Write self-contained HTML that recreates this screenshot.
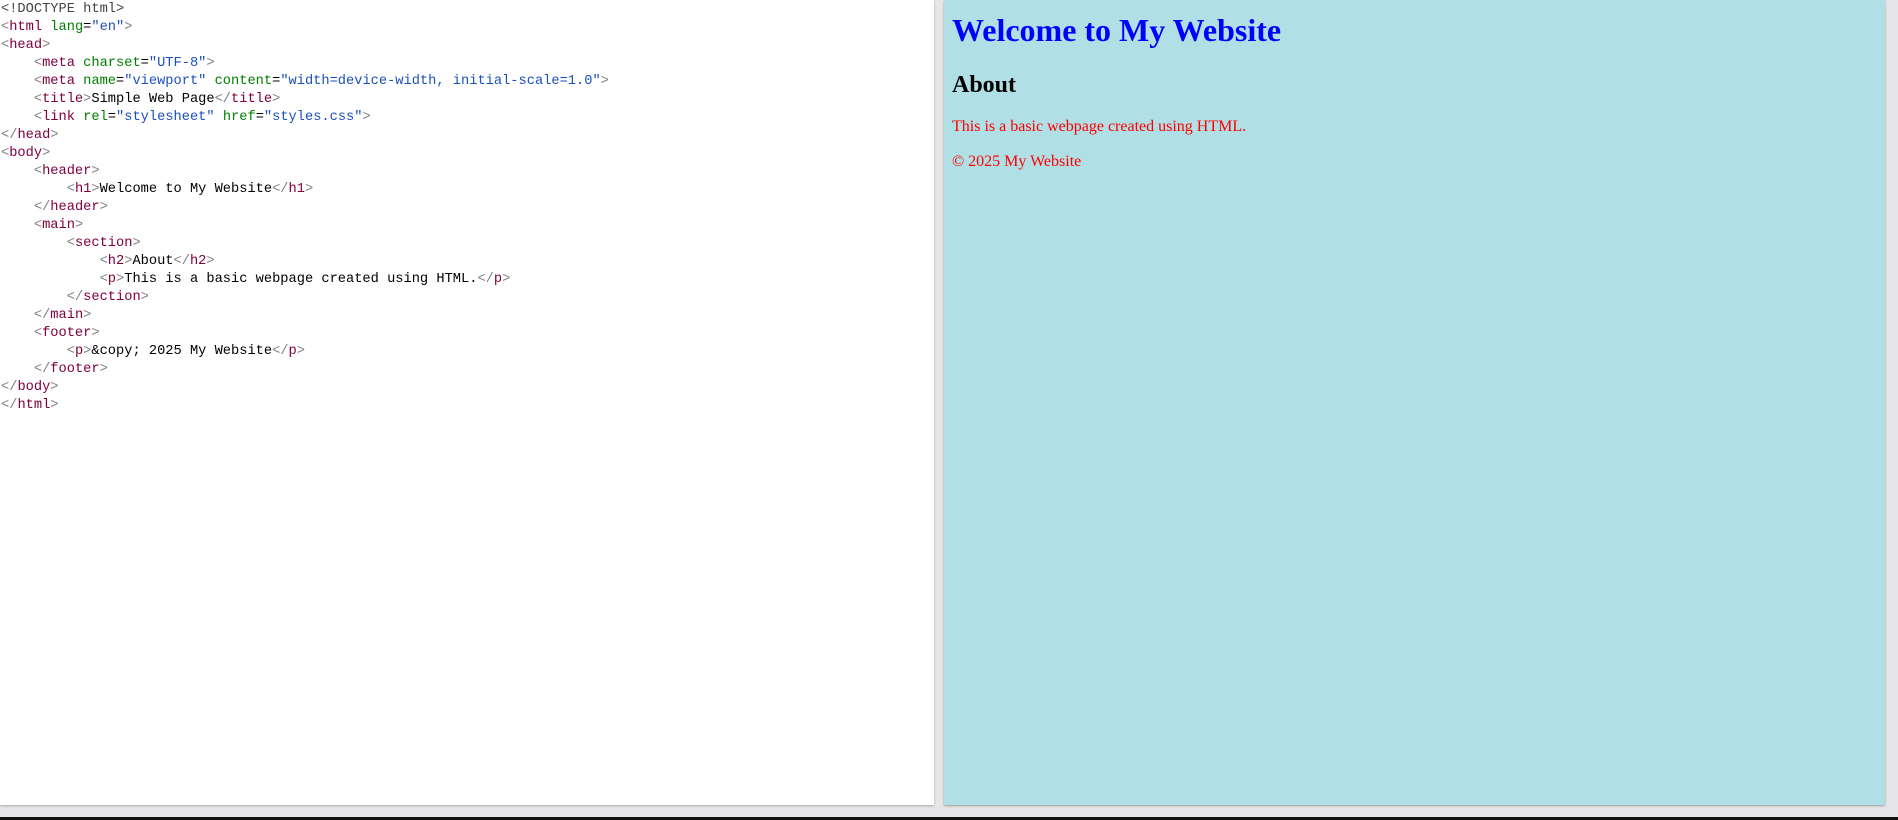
<!DOCTYPE html>
<html><head><meta charset="utf-8"><style>
html,body{margin:0;padding:0;width:1898px;height:820px;overflow:hidden;background:#e6e6e8;position:relative}
#code{position:absolute;left:0;top:0;width:934px;height:805px;background:#fff;box-shadow:0 1px 2px #aaa}
#code pre{margin:0;padding:1px 0 0 1px;font-family:"Liberation Mono",monospace;font-size:13.7px;line-height:18px;color:#000}
.b{color:#808080}.t{color:#800040}.a{color:#008000}.v{color:#1a4fc0}.d{color:#444}
#prev{position:absolute;left:944px;top:0;width:941px;height:805px;background:#b0dfe5;box-shadow:0 1px 2px #999;font-family:"Liberation Serif",serif}
#prev div{position:absolute;left:8px;white-space:nowrap}
#line{position:absolute;left:0;top:817px;width:1898px;height:3px;background:#111}
</style></head><body>
<div id="code"><pre><span class="d">&lt;!DOCTYPE html&gt;</span>
<span class="b">&lt;</span><span class="t">html</span> <span class="a">lang</span>=<span class="v">"en"</span><span class="b">&gt;</span>
<span class="b">&lt;</span><span class="t">head</span><span class="b">&gt;</span>
    <span class="b">&lt;</span><span class="t">meta</span> <span class="a">charset</span>=<span class="v">"UTF-8"</span><span class="b">&gt;</span>
    <span class="b">&lt;</span><span class="t">meta</span> <span class="a">name</span>=<span class="v">"viewport"</span> <span class="a">content</span>=<span class="v">"width=device-width, initial-scale=1.0"</span><span class="b">&gt;</span>
    <span class="b">&lt;</span><span class="t">title</span><span class="b">&gt;</span>Simple Web Page<span class="b">&lt;/</span><span class="t">title</span><span class="b">&gt;</span>
    <span class="b">&lt;</span><span class="t">link</span> <span class="a">rel</span>=<span class="v">"stylesheet"</span> <span class="a">href</span>=<span class="v">"styles.css"</span><span class="b">&gt;</span>
<span class="b">&lt;/</span><span class="t">head</span><span class="b">&gt;</span>
<span class="b">&lt;</span><span class="t">body</span><span class="b">&gt;</span>
    <span class="b">&lt;</span><span class="t">header</span><span class="b">&gt;</span>
        <span class="b">&lt;</span><span class="t">h1</span><span class="b">&gt;</span>Welcome to My Website<span class="b">&lt;/</span><span class="t">h1</span><span class="b">&gt;</span>
    <span class="b">&lt;/</span><span class="t">header</span><span class="b">&gt;</span>
    <span class="b">&lt;</span><span class="t">main</span><span class="b">&gt;</span>
        <span class="b">&lt;</span><span class="t">section</span><span class="b">&gt;</span>
            <span class="b">&lt;</span><span class="t">h2</span><span class="b">&gt;</span>About<span class="b">&lt;/</span><span class="t">h2</span><span class="b">&gt;</span>
            <span class="b">&lt;</span><span class="t">p</span><span class="b">&gt;</span>This is a basic webpage created using HTML.<span class="b">&lt;/</span><span class="t">p</span><span class="b">&gt;</span>
        <span class="b">&lt;/</span><span class="t">section</span><span class="b">&gt;</span>
    <span class="b">&lt;/</span><span class="t">main</span><span class="b">&gt;</span>
    <span class="b">&lt;</span><span class="t">footer</span><span class="b">&gt;</span>
        <span class="b">&lt;</span><span class="t">p</span><span class="b">&gt;</span>&amp;copy; 2025 My Website<span class="b">&lt;/</span><span class="t">p</span><span class="b">&gt;</span>
    <span class="b">&lt;/</span><span class="t">footer</span><span class="b">&gt;</span>
<span class="b">&lt;/</span><span class="t">body</span><span class="b">&gt;</span>
<span class="b">&lt;/</span><span class="t">html</span><span class="b">&gt;</span></pre></div>
<div id="prev">
<div style="top:12px;font-size:32px;font-weight:bold;color:#0000ff;line-height:37px">Welcome to My Website</div>
<div style="top:71px;font-size:24px;font-weight:bold;color:#000;line-height:28px">About</div>
<div style="top:118px;font-size:16px;color:#ff0000;line-height:18px">This is a basic webpage created using HTML.</div>
<div style="top:153px;font-size:16px;color:#ff0000;line-height:18px">© 2025 My Website</div>
</div>
<div id="line"></div>
</body></html>
